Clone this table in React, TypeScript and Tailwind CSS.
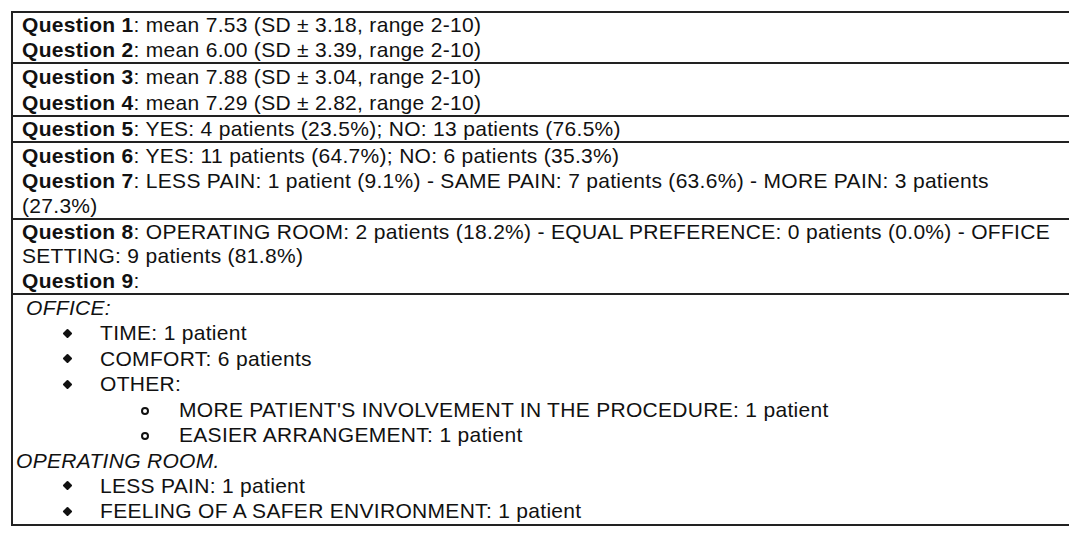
import React from "react";

const Q = ({ n }: { n: number }) => (
  <span className="font-bold">Question {n}</span>
);

const Line = ({ children, className = "" }: { children: React.ReactNode; className?: string }) => (
  <div className={`whitespace-nowrap ${className}`}>{children}</div>
);

const Bullet = ({ children }: { children: React.ReactNode }) => (
  <div className="flex items-center whitespace-nowrap">
    <span className="w-[87px] shrink-0 pl-[51px] flex items-center">
      <span className="block w-[7px] h-[7px] bg-[#111] rotate-45 rounded-[1px]" />
    </span>
    <span>{children}</span>
  </div>
);

const SubBullet = ({ children }: { children: React.ReactNode }) => (
  <div className="flex items-center whitespace-nowrap">
    <span className="w-[166px] shrink-0 pl-[128px] flex items-center">
      <span className="block w-[8px] h-[8px] rounded-full border-[2px] border-[#111] mt-[3px]" />
    </span>
    <span>{children}</span>
  </div>
);

export default function App() {
  return (
    <div className="w-[1080px] h-[542px] bg-white overflow-hidden pt-[11px] pl-[11px]">
      <div
        className="w-[1058px] border-l-2 border-t-2 border-b-2 border-[#222] text-[#111] text-[21px] tracking-[0.3px]"
        style={{ fontFamily: '"Liberation Sans", Arial, sans-serif' }}
      >
        <div className="leading-[24.5px] pl-[9px]">
          <Line>
            <Q n={1} />: mean 7.53 (SD ± 3.18, range 2-10)
          </Line>
          <Line>
            <Q n={2} />: mean 6.00 (SD ± 3.39, range 2-10)
          </Line>
        </div>
        <div className="border-t-2 border-[#222] leading-[25.5px] pl-[9px]">
          <Line>
            <Q n={3} />: mean 7.88 (SD ± 3.04, range 2-10)
          </Line>
          <Line>
            <Q n={4} />: mean 7.29 (SD ± 2.82, range 2-10)
          </Line>
        </div>
        <div className="border-t-2 border-[#222] leading-[24px] pl-[9px]">
          <Line>
            <Q n={5} />: YES: 4 patients (23.5%); NO: 13 patients (76.5%)
          </Line>
        </div>
        <div className="border-t-2 border-[#222] leading-[25px] pl-[9px]">
          <Line>
            <Q n={6} />: YES: 11 patients (64.7%); NO: 6 patients (35.3%)
          </Line>
          <Line>
            <Q n={7} />: LESS PAIN: 1 patient (9.1%) - SAME PAIN: 7 patients (63.6%) - MORE PAIN: 3 patients
          </Line>
          <Line>(27.3%)</Line>
        </div>
        <div className="border-t-2 border-[#222] leading-[24.33px] pl-[9px]">
          <Line>
            <Q n={8} />: OPERATING ROOM: 2 patients (18.2%) - EQUAL PREFERENCE: 0 patients (0.0%) - OFFICE
          </Line>
          <Line>SETTING: 9 patients (81.8%)</Line>
          <Line>
            <Q n={9} />:
          </Line>
        </div>
        <div className="border-t-2 border-[#222] leading-[25.44px]">
          <Line className="italic pl-[13px]">OFFICE:</Line>
          <Bullet>TIME: 1 patient</Bullet>
          <Bullet>COMFORT: 6 patients</Bullet>
          <Bullet>OTHER:</Bullet>
          <SubBullet>MORE PATIENT'S INVOLVEMENT IN THE PROCEDURE: 1 patient</SubBullet>
          <SubBullet>EASIER ARRANGEMENT: 1 patient</SubBullet>
          <Line className="italic pl-[3px]">OPERATING ROOM.</Line>
          <Bullet>LESS PAIN: 1 patient</Bullet>
          <Bullet>FEELING OF A SAFER ENVIRONMENT: 1 patient</Bullet>
        </div>
      </div>
    </div>
  );
}
